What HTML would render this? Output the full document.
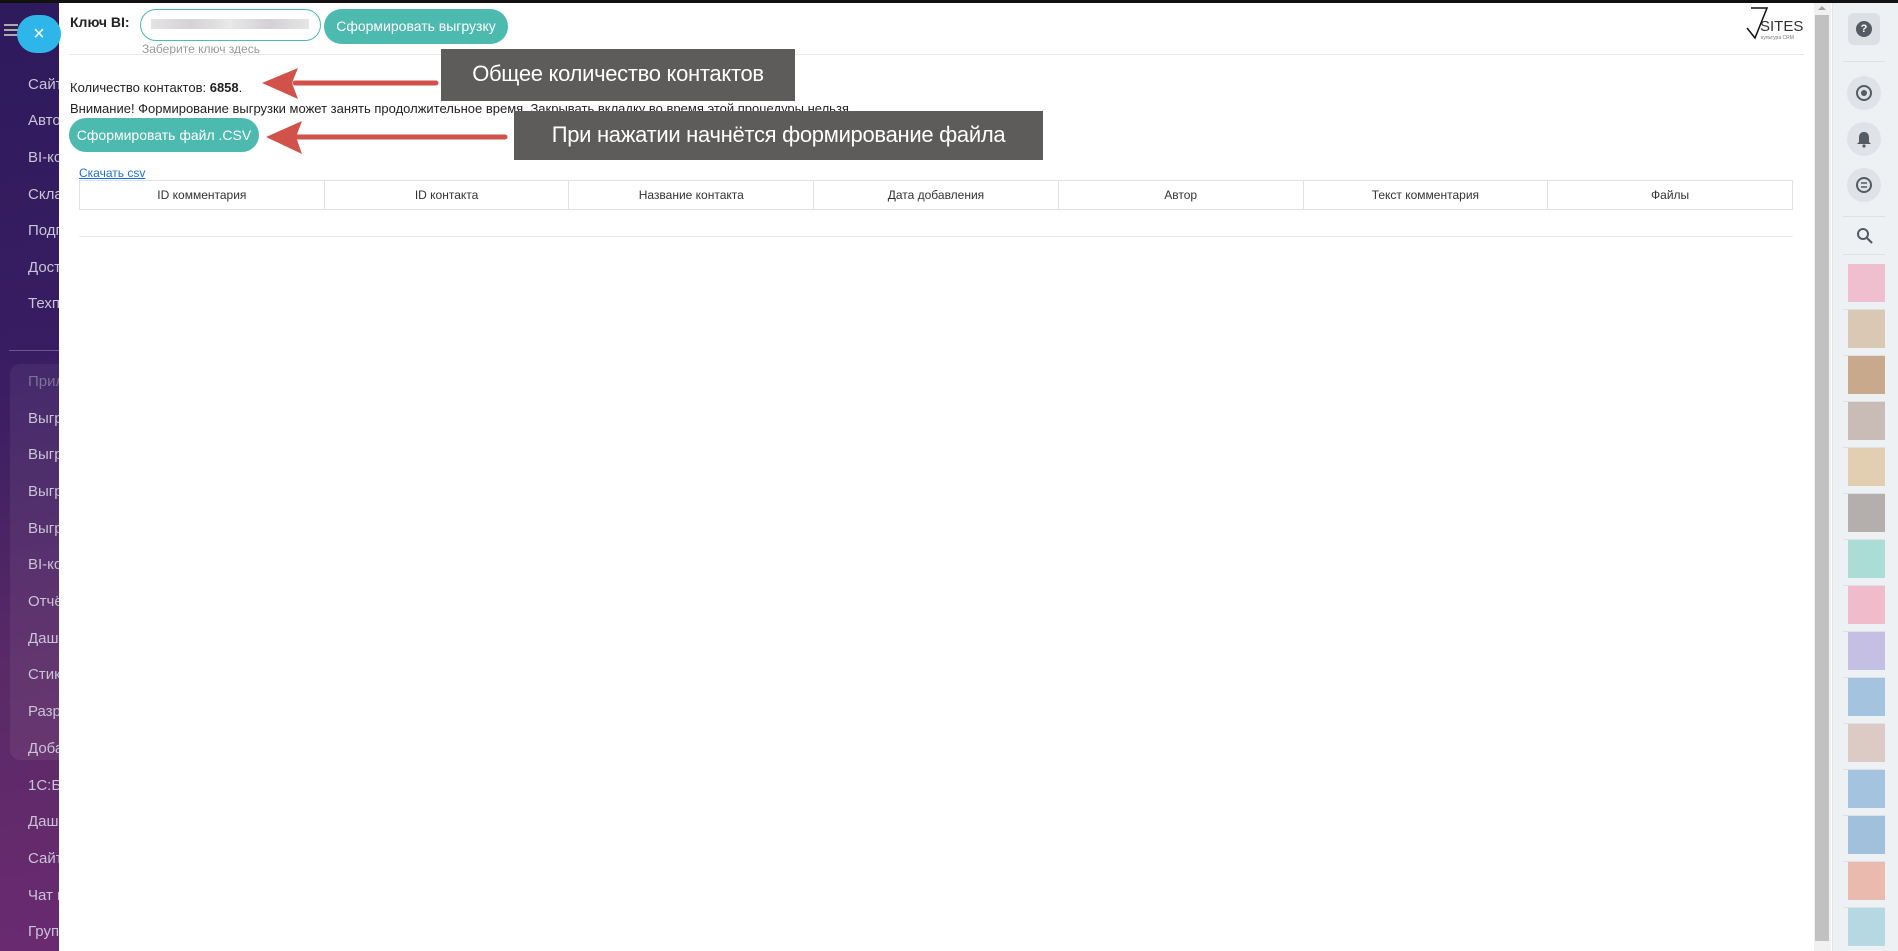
<!DOCTYPE html>
<html><head><meta charset="utf-8">
<style>
*{box-sizing:border-box;margin:0;padding:0}
body{width:1898px;height:951px;overflow:hidden;position:relative;font-family:"Liberation Sans",sans-serif;background:#fff}
#side{position:absolute;left:0;top:0;width:60px;height:951px;background:linear-gradient(170deg,#2d1a5c 0%,#3a1d62 40%,#5a2a66 70%,#6a2a70 100%);overflow:hidden}
#side .it{position:absolute;left:28px;font-size:15px;color:#c9c4d6;white-space:nowrap}
#side .grp{position:absolute;left:10px;top:364px;width:80px;height:396px;background:rgba(255,255,255,0.06);border-radius:10px}
#topbar{position:absolute;left:0;top:0;width:1898px;height:3px;background:#111}
#close{position:absolute;left:17px;top:15px;width:44px;height:38px;border-radius:19px;background:#2eb6ea;color:#fff;font-size:20px;text-align:center;line-height:38px}
#main{position:absolute;left:59px;top:3px;width:1773px;height:948px;background:#fff}
.t{position:absolute;font-size:13px;color:#222;white-space:nowrap}
.btn{position:absolute;background:#4dbaaf;color:#fff;font-size:14px;border-radius:18px;text-align:center;white-space:nowrap}
.ann{position:absolute;background:#5e5c5a;color:#fff;font-size:22px;text-align:center;font-family:"Liberation Sans",sans-serif;white-space:nowrap;letter-spacing:-0.3px}
table{position:absolute;left:79px;top:180px;width:1714px;border-collapse:collapse;table-layout:fixed}
td{border:1.5px solid #e0e2e6;height:29px;font-size:12px;color:#333;text-align:center}
#sb{position:absolute;left:1814px;top:3px;width:17px;height:948px;background:#f1f1f1}
#thumb{position:absolute;left:1815px;top:15px;width:14px;height:926px;background:#c1c1c1}
#rp{position:absolute;left:1832px;top:3px;width:66px;height:948px;background:#eef1f4;border-left:1px solid #e2e5e9}
.cb{position:absolute;left:1847px;width:34px;height:34px;border-radius:50%;background:#dfe2e6}
.sep{position:absolute;left:1843px;width:42px;height:1px;background:#dde0e4}
.av{position:absolute;left:1848px;width:37px;height:38px}
</style></head><body>
<div id="side">
<div class="grp"></div>
<div class="it" style="top:76px">Сайты</div>
<div class="it" style="top:112px">Автоворонки</div>
<div class="it" style="top:149px">BI-конструктор</div>
<div class="it" style="top:186px">Склад</div>
<div class="it" style="top:222px">Подписки</div>
<div class="it" style="top:259px">Доступ</div>
<div class="it" style="top:295px">Техподдержка</div>
<div style="position:absolute;left:9px;top:350px;width:60px;height:1px;background:#6b5a88"></div>
<div class="it" style="top:373px;color:#7d7294">Приложения</div>
<div class="it" style="top:410px">Выгрузка</div>
<div class="it" style="top:446px">Выгрузка</div>
<div class="it" style="top:483px">Выгрузка</div>
<div class="it" style="top:520px">Выгрузка</div>
<div class="it" style="top:556px">BI-конструктор</div>
<div class="it" style="top:593px">Отчёты</div>
<div class="it" style="top:630px">Дашборды</div>
<div class="it" style="top:666px">Стикеры</div>
<div class="it" style="top:703px">Разработка</div>
<div class="it" style="top:740px">Добавить</div>
<div class="it" style="top:777px">1С:Битрикс</div>
<div class="it" style="top:813px">Дашборд</div>
<div class="it" style="top:850px">Сайты</div>
<div class="it" style="top:887px">Чат и звонки</div>
<div class="it" style="top:923px">Группы</div>
<div style="position:absolute;left:4px;top:24px;width:14px;height:2px;background:#aaa;box-shadow:0 5px 0 #aaa,0 10px 0 #aaa"></div>
</div>
<div id="topbar"></div>
<div id="main"></div>
<div id="close">×</div>

<div class="t" style="left:70px;top:14px;font-size:14px;font-weight:bold">Ключ BI:</div>
<div style="position:absolute;left:140px;top:9px;width:181px;height:32px;border:1px solid #4dbaaf;border-radius:16px;background:#fff"><div style="position:absolute;left:10px;top:9px;width:158px;height:10px;background:linear-gradient(90deg,#e4e4e4,#d6d2d6,#e8e8e8,#d4d0d6,#e6e6e6)"></div></div>
<div class="btn" style="left:324px;top:9px;width:184px;height:35px;line-height:35px">Сформировать выгрузку</div>
<div class="t" style="left:142px;top:42px;font-size:12px;color:#999">Заберите ключ <u>здесь</u></div>
<div style="position:absolute;left:69px;top:54px;width:1735px;height:1px;background:#e8e8e8"></div>
<div style="position:absolute;left:1745px;top:6px;width:60px;height:34px">
<svg width="60" height="34" viewBox="0 0 60 34"><path d="M2 22 L10 32 L22 2 L6 2" fill="none" stroke="#111" stroke-width="1.5"/><text x="15" y="25" font-family="Liberation Sans" font-size="15" fill="#333">SITES</text><text x="16" y="33" font-family="Liberation Sans" font-size="5" fill="#777">культура CRM</text></svg>
</div>

<div class="t" style="left:70px;top:80px">Количество контактов: <b>6858</b>.</div>
<div class="t" style="left:70px;top:101px">Внимание! Формирование выгрузки может занять продолжительное время. Закрывать вкладку во время этой процедуры нельзя.</div>
<div class="btn" style="left:69px;top:118px;width:190px;height:34px;line-height:34px">Сформировать файл .CSV</div>
<div class="t" style="left:79px;top:166px;font-size:12px;color:#1a6fd4;text-decoration:underline">Скачать csv</div>

<table><tr><td>ID комментария</td><td>ID контакта</td><td>Название контакта</td><td>Дата добавления</td><td>Автор</td><td>Текст комментария</td><td>Файлы</td></tr></table>
<div style="position:absolute;left:79px;top:236px;width:1714px;height:1px;background:#e8e8e8"></div>

<svg style="position:absolute;left:0;top:0" width="1100" height="200">
<line x1="295" y1="83" x2="436" y2="83" stroke="#d0524a" stroke-width="5" stroke-linecap="round"/>
<polygon points="262,83 298,68 292,83 298,99" fill="#d0524a"/>
<line x1="295" y1="137" x2="505" y2="137" stroke="#d0524a" stroke-width="5" stroke-linecap="round"/>
<polygon points="266,137 302,121 296,137 302,154" fill="#d0524a"/>
</svg>
<div class="ann" style="left:441px;top:49px;width:354px;height:52px;line-height:50px">Общее количество контактов</div>
<div class="ann" style="left:514px;top:111px;width:529px;height:49px;line-height:48px">При нажатии начнётся формирование файла</div>

<div id="sb"></div><div id="thumb"></div>
<div style="position:absolute;left:1818px;top:6px;width:0;height:0;border-left:4px solid transparent;border-right:4px solid transparent;border-bottom:4px solid #a3a3a3"></div>
<div id="rp"></div>
<div style="position:absolute;left:1848px;top:13px;width:32px;height:32px;border-radius:6px;background:#dcdfe3"></div>
<div style="position:absolute;left:1856px;top:21px;width:16px;height:16px;border-radius:50%;background:#555b63;color:#fff;font-size:11px;font-weight:bold;text-align:center;line-height:16px">?</div>
<div class="sep" style="top:61px"></div>
<div class="cb" style="top:76px"></div>
<div style="position:absolute;left:1856px;top:85px;width:16px;height:16px;border-radius:50%;border:2.5px solid #555b63"></div>
<div style="position:absolute;left:1861px;top:90px;width:6px;height:6px;border-radius:50%;background:#555b63"></div>
<div class="cb" style="top:122px"></div>
<svg style="position:absolute;left:1855px;top:130px" width="18" height="18" viewBox="0 0 18 18"><path d="M9 2 C5 2 4 5 4 8 L4 12 L2 14 L16 14 L14 12 L14 8 C14 5 13 2 9 2 Z" fill="#555b63"/><circle cx="9" cy="16" r="1.6" fill="#555b63"/></svg>
<div class="cb" style="top:168px"></div>
<svg style="position:absolute;left:1855px;top:176px" width="18" height="18" viewBox="0 0 18 18"><circle cx="9" cy="9" r="7" fill="none" stroke="#555b63" stroke-width="2"/><path d="M6 7 H12 M6 11 H12" stroke="#555b63" stroke-width="1.6"/></svg>
<div class="sep" style="top:216px"></div>
<svg style="position:absolute;left:1856px;top:227px" width="18" height="18" viewBox="0 0 18 18"><circle cx="7" cy="7" r="5" fill="none" stroke="#555b63" stroke-width="2"/><path d="M11 11 L16 16" stroke="#555b63" stroke-width="2.2"/></svg>
<div class="sep" style="top:254px"></div>

<div class="av" style="top:264px;background:#efbfcf"></div>
<div class="av" style="top:310px;background:#d9c9b4"></div>
<div class="av" style="top:356px;background:#c9a98c"></div>
<div class="av" style="top:402px;background:#c9bbb5"></div>
<div class="av" style="top:448px;background:#e2cfb2"></div>
<div class="av" style="top:494px;background:#b4afad"></div>
<div class="av" style="top:540px;background:#a9ddd6"></div>
<div class="av" style="top:586px;background:#f0bccb"></div>
<div class="av" style="top:632px;background:#c5c0e3"></div>
<div class="av" style="top:678px;background:#a4c3df"></div>
<div class="av" style="top:724px;background:#dccbc5"></div>
<div class="av" style="top:770px;background:#a3c3df"></div>
<div class="av" style="top:816px;background:#a0c0dc"></div>
<div class="av" style="top:862px;background:#ebbaae"></div>
<div class="av" style="top:908px;background:#b5d8e3"></div>
<div class="sep" style="top:309px"></div><div class="sep" style="top:355px"></div><div class="sep" style="top:401px"></div><div class="sep" style="top:447px"></div><div class="sep" style="top:493px"></div><div class="sep" style="top:539px"></div><div class="sep" style="top:585px"></div><div class="sep" style="top:631px"></div><div class="sep" style="top:677px"></div><div class="sep" style="top:723px"></div><div class="sep" style="top:769px"></div><div class="sep" style="top:815px"></div><div class="sep" style="top:861px"></div><div class="sep" style="top:907px"></div>
</body></html>
